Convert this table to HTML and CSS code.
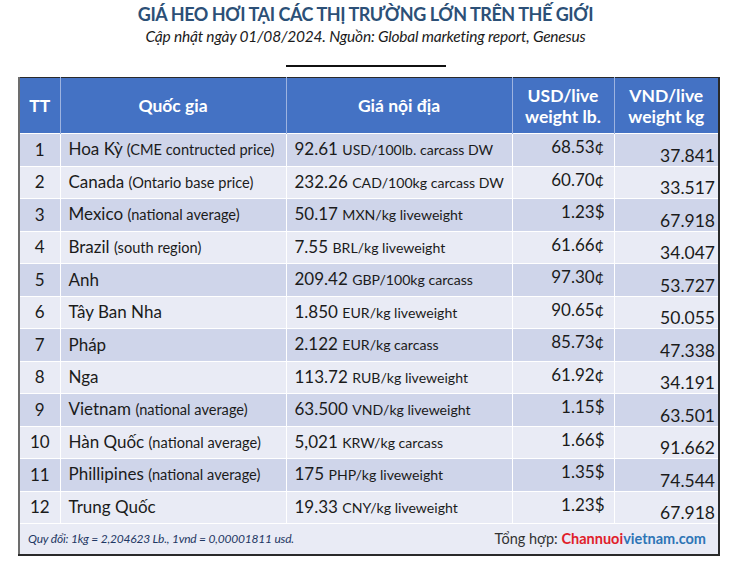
FILE: index.html
```html
<!DOCTYPE html>
<html lang="vi">
<head>
<meta charset="utf-8">
<link rel="stylesheet" href="styles.css">
</head>
<body>
<div class="page">
  <h1 class="title">GIÁ HEO HƠI TẠI CÁC THỊ TRƯỜNG LỚN TRÊN THẾ GIỚI</h1>
  <p class="subtitle">Cập nhật ngày 01/08/2024. Nguồn: Global marketing report, Genesus</p>
  <div class="rule"></div>
  <table class="grid">
    <colgroup>
      <col class="c-tt"><col class="c-country"><col class="c-price"><col class="c-usd"><col class="c-vnd">
    </colgroup>
    <thead>
      <tr>
        <th>TT</th>
        <th>Quốc gia</th>
        <th>Giá nội địa</th>
        <th>USD/live<br>weight lb.</th>
        <th>VND/live<br>weight kg</th>
      </tr>
    </thead>
    <tbody>
      <tr class="odd"><td class="tt">1</td><td class="country">Hoa Kỳ <small>(CME contructed price)</small></td><td class="price">92.61 <small>USD/100lb. carcass DW</small></td><td class="usd">68.53¢</td><td class="vnd">37.841</td></tr>
      <tr class="even"><td class="tt">2</td><td class="country">Canada <small>(Ontario base price)</small></td><td class="price">232.26 <small>CAD/100kg carcass DW</small></td><td class="usd">60.70¢</td><td class="vnd">33.517</td></tr>
      <tr class="odd"><td class="tt">3</td><td class="country">Mexico <small>(national average)</small></td><td class="price">50.17 <small>MXN/kg liveweight</small></td><td class="usd">1.23$</td><td class="vnd">67.918</td></tr>
      <tr class="even"><td class="tt">4</td><td class="country">Brazil <small>(south region)</small></td><td class="price">7.55 <small>BRL/kg liveweight</small></td><td class="usd">61.66¢</td><td class="vnd">34.047</td></tr>
      <tr class="odd"><td class="tt">5</td><td class="country">Anh</td><td class="price">209.42 <small>GBP/100kg carcass</small></td><td class="usd">97.30¢</td><td class="vnd">53.727</td></tr>
      <tr class="even"><td class="tt">6</td><td class="country">Tây Ban Nha</td><td class="price">1.850 <small>EUR/kg liveweight</small></td><td class="usd">90.65¢</td><td class="vnd">50.055</td></tr>
      <tr class="odd"><td class="tt">7</td><td class="country">Pháp</td><td class="price">2.122 <small>EUR/kg carcass</small></td><td class="usd">85.73¢</td><td class="vnd">47.338</td></tr>
      <tr class="even"><td class="tt">8</td><td class="country">Nga</td><td class="price">113.72 <small>RUB/kg liveweight</small></td><td class="usd">61.92¢</td><td class="vnd">34.191</td></tr>
      <tr class="odd"><td class="tt">9</td><td class="country">Vietnam <small>(national average)</small></td><td class="price">63.500 <small>VND/kg liveweight</small></td><td class="usd">1.15$</td><td class="vnd">63.501</td></tr>
      <tr class="even"><td class="tt">10</td><td class="country">Hàn Quốc <small>(national average)</small></td><td class="price">5,021 <small>KRW/kg carcass</small></td><td class="usd">1.66$</td><td class="vnd">91.662</td></tr>
      <tr class="odd"><td class="tt">11</td><td class="country">Phillipines <small>(national average)</small></td><td class="price">175 <small>PHP/kg liveweight</small></td><td class="usd">1.35$</td><td class="vnd">74.544</td></tr>
      <tr class="even"><td class="tt">12</td><td class="country">Trung Quốc</td><td class="price">19.33 <small>CNY/kg liveweight</small></td><td class="usd">1.23$</td><td class="vnd">67.918</td></tr>
    </tbody>
    <tfoot>
      <tr>
        <td colspan="5">
          <div class="foot">
            <span class="note">Quy đổi: 1kg = 2,204623 Lb., 1vnd = 0,00001811 usd.</span>
            <span class="credit">Tổng hợp: <b class="red">Channuoi</b><b class="blue">vietnam.com</b></span>
          </div>
        </td>
      </tr>
    </tfoot>
  </table>
</div>
</body>
</html>
```

FILE: styles.css
```css
* { box-sizing: border-box; }
html, body { margin: 0; padding: 0; background: #fff; }
body { font-family: "Lato", "Open Sans", sans-serif; color: #1b1b1b; }
.page { width: 731px; height: 570px; padding-top: 3px; }
.title {
  margin: 0;
  text-align: center;
  font-size: 18px;
  font-weight: 700;
  color: #2c5077;
  line-height: 22px;
  letter-spacing: -0.45px;
}
.subtitle {
  margin: 0;
  text-align: center;
  font-style: italic;
  font-size: 15.5px;
  line-height: 23px;
  color: #1b1b1b;
  letter-spacing: -0.2px;
}
.rule {
  width: 160px;
  height: 2px;
  background: #111;
  margin: 17px auto 10px 286px;
}
.grid {
  margin-left: 18px;
  width: 700px;
  border-collapse: collapse;
  table-layout: fixed;
  border-top: 1px solid #2a2a2a;
  border-left: 2px solid #6d6d6d;
  border-right: 2px solid #2a2a2a;
  border-bottom: 2px solid #2a2a2a;
}
.c-tt { width: 41px; }
.c-country { width: 226px; }
.c-price { width: 226px; }
.c-usd { width: 102px; }
.c-vnd { width: 105px; }
.grid th {
  background: #4472c4;
  color: #fff;
  font-weight: 700;
  font-size: 17.5px;
  line-height: 21px;
  height: 56px;
  padding: 0 2px;
  text-align: center;
  border-left: 1px solid #9db3e0;
}
.grid th:first-child { border-left: none; }
.grid td {
  height: 32.5px;
  padding: 0;
  font-size: 17px;
  line-height: 20px;
  border-left: 1px solid #fff;
  border-top: 1px solid #fff;
  white-space: nowrap;
}
.grid td:first-child { border-left: none; }
.grid tr.odd td { background: #cfd5ea; }
.grid tr.even td { background: #e9ebf5; }
.country small { font-size: 14.6px; }
.price small { font-size: 14.1px; }
.tt { text-align: center; }
.country, .price { padding-left: 8px !important; }
.usd { text-align: right; padding-right: 9px !important; padding-bottom: 5px !important; }
.vnd { text-align: right; vertical-align: bottom; padding-right: 3px !important; font-size: 17.5px !important; }
.grid tfoot td {
  background: #e9ebf5;
  height: 31px;
  padding: 0 12px 0 8px;
}
.foot { display: flex; justify-content: space-between; align-items: center; }
.note { font-style: italic; font-size: 12px; color: #1f3864; letter-spacing: -0.2px; }
.credit { font-size: 14.5px; color: #333; }
.red { color: #e0202a; font-weight: 700; }
.blue { color: #2e75b6; font-weight: 700; }
```
